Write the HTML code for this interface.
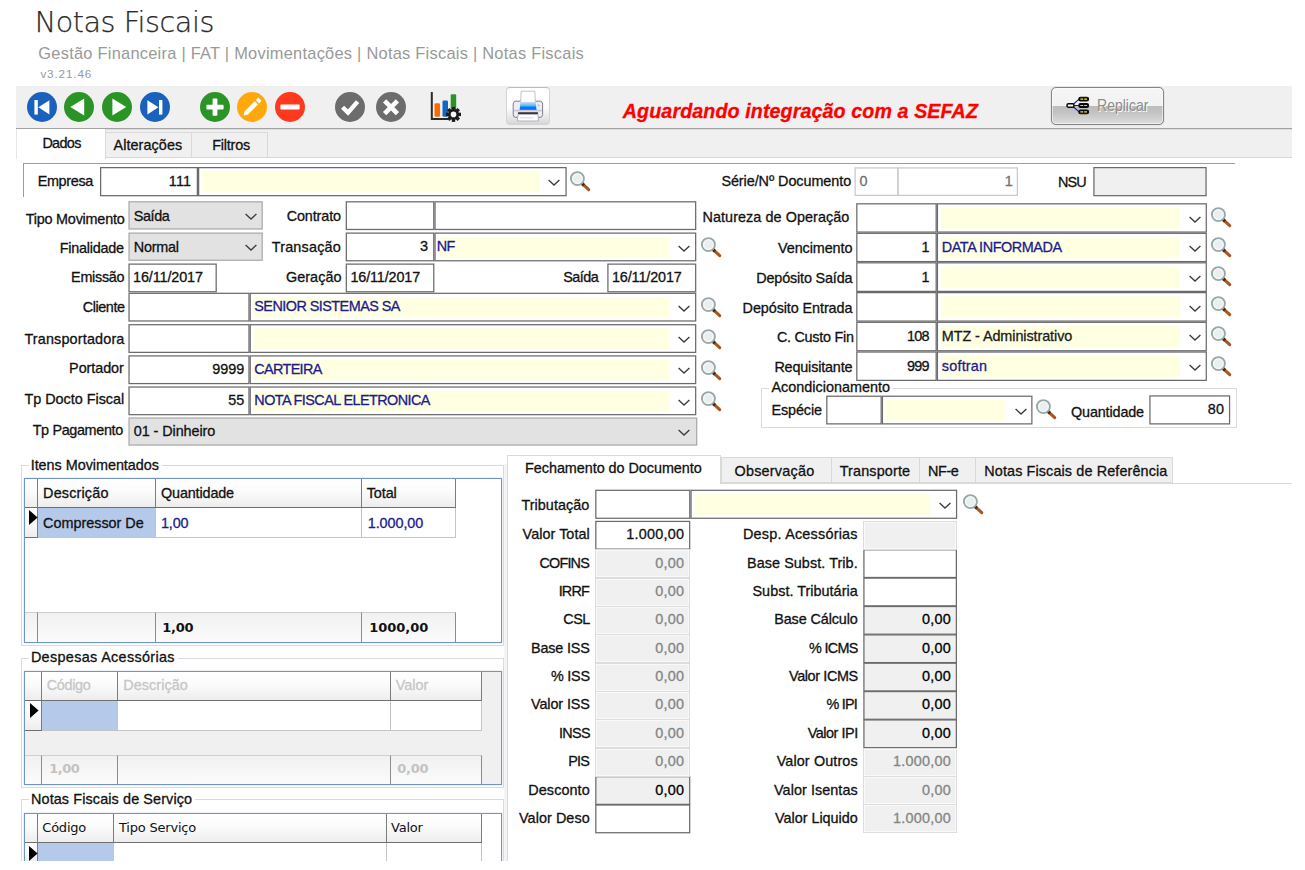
<!DOCTYPE html>
<html lang="pt-BR"><head><meta charset="utf-8"><title>Notas Fiscais</title>
<style>
html,body{margin:0;padding:0;background:#fff;}
body{width:1305px;height:870px;position:relative;overflow:hidden;font-family:"Liberation Sans",Arial,sans-serif;font-size:14.4px;color:#111;}
div,svg{position:absolute;box-sizing:border-box;}
.t{white-space:nowrap;height:20px;-webkit-text-stroke:0.3px;}
.a{overflow:visible;}
.tab{background:#f0f0f0;border:1px solid #d9d9d9;}
.gh{background:linear-gradient(#ffffff,#fbfbfb 45%,#ededed);border-right:1px solid #7c7c7c;border-bottom:1px solid #6f6f6f;}
.gc{background:#fff;border-right:1px solid #c4c4c4;border-bottom:1px solid #c4c4c4;}
.gf{background:linear-gradient(#f1f1f1,#fbfbfb);border-right:1px solid #8c8c8c;border-top:1px solid #cfcfcf;}
.grid{border:1px solid #7094c6;background:#fff;box-shadow:0 0 0.8px #7094c6;}
.grp{border:1px solid #dadada;}
.dis{background:#f0f0f0;border:1px solid #dddddd;box-shadow:inset 0 0 0 1px #f9f9f9;}
</style></head><body>

<div class="t" style="left:34.8px;top:2.4px;font-family:'DejaVu Sans Light','DejaVu Sans','Liberation Sans',sans-serif;font-weight:200;font-size:28.6px;line-height:40px;height:40px;color:#2a2a2a;letter-spacing:-0.45px;-webkit-text-stroke:0.25px;">Notas Fiscais</div>
<div class="t" style="left:38.30px;top:43.12px;font-size:16.4px;line-height:20px;color:#999;letter-spacing:0.257px;-webkit-text-stroke:0;">Gestão Financeira | FAT | Movimentações | Notas Fiscais | Notas Fiscais</div>
<div class="t" style="left:40.40px;top:64.45px;font-size:11.7px;line-height:20px;color:#999;letter-spacing:0.864px;-webkit-text-stroke:0;">v3.21.46</div>
<div style="left:16px;top:86px;width:1276px;height:72px;background:#f0f0f0;"></div>
<div style="left:16px;top:127.5px;width:1276px;height:1px;background:#a2a2a2;"></div>
<div style="left:16px;top:128.5px;width:1276px;height:1px;background:#dedede;"></div>
<div style="left:16px;top:157.4px;width:1276px;height:1px;background:#d6d6d6;"></div>
<svg class="a" style="left:26.6px;top:92.2px" width="30" height="30" viewBox="0 0 30 30"><circle cx="15" cy="15" r="15" fill="#1a60bd"/><rect x="7.4" y="8" width="3.4" height="14.6" fill="#fff"/><path d="M22.4 8.2 L11.4 15.3 L22.4 22.4 Z" fill="#fff"/></svg>
<svg class="a" style="left:64.3px;top:92.2px" width="30" height="30" viewBox="0 0 30 30"><circle cx="15" cy="15" r="15" fill="#2a9427"/><path d="M20.2 6.6 L6.4 15 L20.2 23.4 Z" fill="#fff"/></svg>
<svg class="a" style="left:102.1px;top:92.2px" width="30" height="30" viewBox="0 0 30 30"><circle cx="15" cy="15" r="15" fill="#2a9427"/><path d="M10.4 6.6 L24.2 15 L10.4 23.4 Z" fill="#fff"/></svg>
<svg class="a" style="left:140.0px;top:92.2px" width="30" height="30" viewBox="0 0 30 30"><circle cx="15" cy="15" r="15" fill="#1a60bd"/><rect x="19" y="8" width="3.4" height="14.6" fill="#fff"/><path d="M7.4 8.2 L18.4 15.3 L7.4 22.4 Z" fill="#fff"/></svg>
<svg class="a" style="left:199.5px;top:92.2px" width="30" height="30" viewBox="0 0 30 30"><circle cx="15" cy="15" r="15" fill="#2a9427"/><rect x="12.6" y="6.6" width="4.8" height="17.2" rx="0.8" fill="#fff"/><rect x="6.4" y="12.8" width="17.2" height="4.8" rx="0.8" fill="#fff"/></svg>
<svg class="a" style="left:237.2px;top:92.2px" width="30" height="30" viewBox="0 0 30 30"><circle cx="15" cy="15" r="15" fill="#ffa80c"/><path d="M6.6 23.6 L7.6 19.2 L17.6 9.2 L21 12.6 L11 22.6 Z" fill="#fff"/><path d="M18.7 8.1 L20.6 6.2 Q21.3 5.5 22 6.2 L24 8.2 Q24.7 8.9 24 9.6 L22.1 11.5 Z" fill="#fff"/></svg>
<svg class="a" style="left:275.0px;top:92.2px" width="30" height="30" viewBox="0 0 30 30"><circle cx="15" cy="15" r="15" fill="#fd3a1d"/><rect x="5.4" y="12.5" width="19.2" height="5" rx="0.8" fill="#fff"/></svg>
<svg class="a" style="left:334.5px;top:92.2px" width="30" height="30" viewBox="0 0 30 30"><circle cx="15" cy="15" r="15" fill="#6c6c6c"/><path d="M7.6 15.2 L13 20.6 L22.6 9.6" fill="none" stroke="#fff" stroke-width="4.4"/></svg>
<svg class="a" style="left:376.2px;top:92.2px" width="30" height="30" viewBox="0 0 30 30"><circle cx="15" cy="15" r="15" fill="#6c6c6c"/><path d="M8.6 8.8 L21.4 21.6 M21.4 8.8 L8.6 21.6" fill="none" stroke="#fff" stroke-width="4.6"/></svg>
<svg class="a" style="left:430px;top:91px" width="33" height="32" viewBox="0 0 33 32">
<path d="M1.8 1 V28 H18" fill="none" stroke="#2a2a2a" stroke-width="2"/>
<rect x="4.5" y="12.2" width="5.5" height="13.6" rx="1.2" fill="#ff6a00"/>
<rect x="12.5" y="9.6" width="5.5" height="16.2" rx="1.2" fill="#1565c0"/>
<rect x="20.7" y="3.2" width="5.5" height="16" rx="1.2" fill="#2a9427"/>
<g transform="translate(23.5,23.4)"><circle r="5.4" fill="#1c1c1c"/>
<g fill="#1c1c1c"><rect x="-1.7" y="-7.5" width="3.4" height="15"/><rect x="-1.7" y="-7.5" width="3.4" height="15" transform="rotate(45)"/><rect x="-1.7" y="-7.5" width="3.4" height="15" transform="rotate(90)"/><rect x="-1.7" y="-7.5" width="3.4" height="15" transform="rotate(135)"/></g>
<circle r="2.8" fill="#fafafa"/></g>
</svg>
<div style="left:506px;top:87px;width:43.5px;height:38px;border:1px solid #d4d4d4;border-top-color:#bcbcbc;border-radius:4px;background:linear-gradient(#ffffff,#fdfdfd 55%,#e4e4e4 85%,#d6d6d6);"></div>
<svg class="a" style="left:512px;top:90px" width="32" height="33" viewBox="0 0 32 33">
<defs><linearGradient id="pb" x1="0" y1="0" x2="0" y2="1"><stop offset="0" stop-color="#bfe2fb"/><stop offset="0.45" stop-color="#58b4f7"/><stop offset="0.6" stop-color="#0a78f0"/><stop offset="1" stop-color="#0a6cf0"/></linearGradient></defs>
<path d="M3.2 11.2 Q1.2 11.8 1.2 14 V24.5 Q1.2 27.4 4 27.4 H28 Q30.6 27.4 30.6 24.5 V14 Q30.6 11.8 28.6 11.2 Z" fill="#eceef6" stroke="#7d7d86" stroke-width="1"/>
<path d="M9.2 1.2 H22.8 L23.4 12.6 H8.6 Z" fill="#fffffb" stroke="#c2c2cc" stroke-width="1"/>
<path d="M8.4 12.2 H23.6 L24.6 20.4 H7.6 Z" fill="url(#pb)"/>
<rect x="2" y="19.8" width="28" height="1.6" fill="#c4c6d6"/>
<rect x="5.8" y="22.2" width="20.4" height="1.8" rx="0.9" fill="#2e2a28"/>
<path d="M6 24.4 H26 L26.6 31 H5.4 Z" fill="#fdfdff" stroke="#a9a9b6" stroke-width="0.9"/>
<rect x="8" y="27.4" width="13" height="0.9" fill="#d4d4de"/>
<circle cx="26.6" cy="15.4" r="0.9" fill="#7fd0b0"/>
</svg>
<div class="t" style="left:622.80px;top:101.47px;font-size:19.7px;line-height:20px;color:#ff0000;letter-spacing:0.091px;font-weight:bold;font-style:italic;">Aguardando integração com a SEFAZ</div>
<div style="left:1050.5px;top:87.3px;width:113px;height:37.4px;border:1px solid #858585;border-radius:5px;background:linear-gradient(#f5f5f5,#f2f2f2 49%,#bcbcbc 51%,#c4c4c4 70%,#dedede);box-shadow:inset 0 0 0 1px rgba(255,255,255,.55),0 0 1px #8a8a8a;"></div>
<svg class="a" style="left:1066.2px;top:95.6px" width="24" height="19" viewBox="0 0 25 20">
<path d="M6 10 L14 3 M6 10 L14 10 M6 10 L14 17" stroke="#1a1aa8" stroke-width="1.2" fill="none"/>
<rect x="1" y="8.2" width="7.2" height="3.6" rx="1.4" fill="#fff" stroke="#0a0a0a" stroke-width="1.6"/>
<rect x="13.4" y="1.3" width="10.2" height="4" rx="1.8" fill="#0a0a0a" stroke="#0a0a0a" stroke-width="1.2"/>
<rect x="13.4" y="8" width="10.2" height="4" rx="1.8" fill="#0a0a0a" stroke="#0a0a0a" stroke-width="1.2"/>
<rect x="13.4" y="14.7" width="10.2" height="4" rx="1.8" fill="#0a0a0a" stroke="#0a0a0a" stroke-width="1.2"/>
<path d="M15 3.3 H22 M15 10 H22 M15 16.7 H22" stroke="#ffe600" stroke-width="1.3" stroke-dasharray="3 1"/>
</svg>
<div class="t" style="left:1097.30px;top:95.95px;font-size:16.6px;line-height:20px;color:#8b8b8b;letter-spacing:0.000px;-webkit-text-stroke:0;text-shadow:1px 1px 0 #fff;transform:scaleX(0.846);transform-origin:0 0;">Replicar</div>
<div class="tab" style="left:105px;top:132px;width:86.5px;height:25.5px;"></div>
<div class="tab" style="left:190.5px;top:132px;width:77.5px;height:25.5px;"></div>
<div style="left:16px;top:128.5px;width:89.5px;height:30px;background:#fff;border-right:1px solid #d9d9d9;border-left:1px solid #e6e6e6;"></div>
<div class="t" style="left:42.40px;top:133.01px;font-size:14.4px;line-height:20px;color:#111;letter-spacing:-0.665px;">Dados</div>
<div class="t" style="left:113.50px;top:135.31px;font-size:14.4px;line-height:20px;color:#111;letter-spacing:0.076px;">Alterações</div>
<div class="t" style="left:212.30px;top:135.31px;font-size:14.4px;line-height:20px;color:#111;letter-spacing:-0.214px;">Filtros</div>
<div style="left:23px;top:163px;width:1212px;height:1px;background:#9c9c9c;"></div>
<div style="left:23px;top:163px;width:1px;height:34px;background:#9c9c9c;"></div>
<svg class="a" style="left:0;top:0" width="1305" height="870" viewBox="0 0 1305 870"><rect x="100.62" y="167.62" width="96.75" height="28.05" fill="#fff" stroke="#6b6b6b" stroke-width="1.25"/><rect x="198.62" y="167.62" width="367.45" height="28.05" fill="#fff" stroke="#6b6b6b" stroke-width="1.25"/><rect x="202.20" y="171.40" width="337.80" height="20.90" fill="#ffffe1"/><rect x="855.12" y="167.93" width="42.75" height="27.45" fill="#fff" stroke="#c9c9c9" stroke-width="1.25"/><rect x="898.12" y="167.93" width="119.25" height="27.45" fill="#fff" stroke="#c9c9c9" stroke-width="1.25"/><rect x="1093.92" y="167.62" width="112.15" height="28.05" fill="#f0f0f0" stroke="#6b6b6b" stroke-width="1.25"/><rect x="129.03" y="201.82" width="133.15" height="27.15" fill="#e2e2e2" stroke="#aaaaaa" stroke-width="1.25"/><rect x="346.32" y="201.82" width="87.45" height="27.65" fill="#fff" stroke="#6b6b6b" stroke-width="1.25"/><rect x="435.02" y="201.82" width="260.65" height="27.65" fill="#fff" stroke="#6b6b6b" stroke-width="1.25"/><rect x="129.03" y="233.12" width="133.15" height="27.15" fill="#e2e2e2" stroke="#aaaaaa" stroke-width="1.25"/><rect x="346.32" y="233.12" width="87.45" height="27.65" fill="#fff" stroke="#6b6b6b" stroke-width="1.25"/><rect x="435.02" y="233.12" width="260.65" height="27.65" fill="#fff" stroke="#6b6b6b" stroke-width="1.25"/><rect x="438.60" y="236.90" width="230.70" height="20.50" fill="#ffffe1"/><rect x="129.03" y="264.12" width="87.15" height="27.65" fill="#fff" stroke="#6b6b6b" stroke-width="1.25"/><rect x="346.32" y="264.12" width="87.45" height="27.65" fill="#fff" stroke="#6b6b6b" stroke-width="1.25"/><rect x="607.92" y="264.12" width="87.75" height="27.65" fill="#fff" stroke="#6b6b6b" stroke-width="1.25"/><rect x="129.03" y="293.32" width="119.95" height="27.65" fill="#fff" stroke="#6b6b6b" stroke-width="1.25"/><rect x="250.22" y="293.32" width="445.45" height="27.65" fill="#fff" stroke="#6b6b6b" stroke-width="1.25"/><rect x="253.80" y="297.10" width="415.50" height="20.50" fill="#ffffe1"/><rect x="129.03" y="324.73" width="119.95" height="27.65" fill="#fff" stroke="#6b6b6b" stroke-width="1.25"/><rect x="250.22" y="324.73" width="445.45" height="27.65" fill="#fff" stroke="#6b6b6b" stroke-width="1.25"/><rect x="253.80" y="328.50" width="415.50" height="20.50" fill="#ffffe1"/><rect x="129.03" y="355.93" width="119.95" height="27.65" fill="#fff" stroke="#6b6b6b" stroke-width="1.25"/><rect x="250.22" y="355.93" width="445.45" height="27.65" fill="#fff" stroke="#6b6b6b" stroke-width="1.25"/><rect x="253.80" y="359.70" width="415.50" height="20.50" fill="#ffffe1"/><rect x="129.03" y="387.02" width="119.95" height="27.65" fill="#fff" stroke="#6b6b6b" stroke-width="1.25"/><rect x="250.22" y="387.02" width="445.45" height="27.65" fill="#fff" stroke="#6b6b6b" stroke-width="1.25"/><rect x="253.80" y="390.80" width="415.50" height="20.50" fill="#ffffe1"/><rect x="129.03" y="418.02" width="567.65" height="27.05" fill="#e2e2e2" stroke="#aaaaaa" stroke-width="1.25"/><rect x="856.83" y="203.82" width="79.35" height="28.25" fill="#fff" stroke="#6b6b6b" stroke-width="1.25"/><rect x="937.42" y="203.82" width="268.85" height="28.25" fill="#fff" stroke="#6b6b6b" stroke-width="1.25"/><rect x="941.00" y="207.60" width="239.00" height="21.10" fill="#ffffe1"/><rect x="856.83" y="233.32" width="79.35" height="28.25" fill="#fff" stroke="#6b6b6b" stroke-width="1.25"/><rect x="937.42" y="233.32" width="268.85" height="28.25" fill="#fff" stroke="#6b6b6b" stroke-width="1.25"/><rect x="941.00" y="237.10" width="239.00" height="21.10" fill="#ffffe1"/><rect x="856.83" y="262.82" width="79.35" height="28.55" fill="#fff" stroke="#6b6b6b" stroke-width="1.25"/><rect x="937.42" y="262.82" width="268.85" height="28.55" fill="#fff" stroke="#6b6b6b" stroke-width="1.25"/><rect x="941.00" y="266.60" width="239.00" height="21.40" fill="#ffffe1"/><rect x="856.83" y="292.62" width="79.35" height="28.45" fill="#fff" stroke="#6b6b6b" stroke-width="1.25"/><rect x="937.42" y="292.62" width="268.85" height="28.45" fill="#fff" stroke="#6b6b6b" stroke-width="1.25"/><rect x="941.00" y="296.40" width="239.00" height="21.30" fill="#ffffe1"/><rect x="856.83" y="322.32" width="79.35" height="28.45" fill="#fff" stroke="#6b6b6b" stroke-width="1.25"/><rect x="937.42" y="322.32" width="268.85" height="28.45" fill="#fff" stroke="#6b6b6b" stroke-width="1.25"/><rect x="941.00" y="326.10" width="239.00" height="21.30" fill="#ffffe1"/><rect x="856.83" y="352.02" width="79.35" height="28.35" fill="#fff" stroke="#6b6b6b" stroke-width="1.25"/><rect x="937.42" y="352.02" width="268.85" height="28.35" fill="#fff" stroke="#6b6b6b" stroke-width="1.25"/><rect x="941.00" y="355.80" width="239.00" height="21.20" fill="#ffffe1"/><rect x="826.83" y="396.23" width="54.35" height="27.65" fill="#fff" stroke="#6b6b6b" stroke-width="1.25"/><rect x="882.42" y="396.23" width="149.45" height="27.65" fill="#fff" stroke="#6b6b6b" stroke-width="1.25"/><rect x="886.00" y="400.00" width="120.00" height="20.50" fill="#ffffe1"/><rect x="1149.92" y="395.93" width="79.65" height="27.95" fill="#fff" stroke="#6b6b6b" stroke-width="1.25"/><rect x="595.83" y="490.32" width="93.95" height="27.95" fill="#fff" stroke="#6b6b6b" stroke-width="1.25"/><rect x="691.02" y="490.32" width="265.55" height="27.95" fill="#fff" stroke="#6b6b6b" stroke-width="1.25"/><rect x="694.60" y="494.10" width="235.50" height="20.80" fill="#ffffe1"/><rect x="595.83" y="521.42" width="93.85" height="27.71" fill="#fff" stroke="#6b6b6b" stroke-width="1.25"/><rect x="595.83" y="776.66" width="93.85" height="27.71" fill="#f0f0f0" stroke="#6b6b6b" stroke-width="1.25"/><rect x="595.83" y="805.02" width="93.85" height="27.71" fill="#fff" stroke="#6b6b6b" stroke-width="1.25"/><rect x="863.92" y="549.78" width="92.45" height="27.71" fill="#fff" stroke="#6b6b6b" stroke-width="1.25"/><rect x="863.92" y="578.14" width="92.45" height="27.71" fill="#fff" stroke="#6b6b6b" stroke-width="1.25"/><rect x="863.92" y="606.50" width="92.45" height="27.71" fill="#f0f0f0" stroke="#6b6b6b" stroke-width="1.25"/><rect x="863.92" y="634.87" width="92.45" height="27.71" fill="#f0f0f0" stroke="#6b6b6b" stroke-width="1.25"/><rect x="863.92" y="663.22" width="92.45" height="27.71" fill="#f0f0f0" stroke="#6b6b6b" stroke-width="1.25"/><rect x="863.92" y="691.58" width="92.45" height="27.71" fill="#f0f0f0" stroke="#6b6b6b" stroke-width="1.25"/><rect x="863.92" y="719.94" width="92.45" height="27.71" fill="#f0f0f0" stroke="#6b6b6b" stroke-width="1.25"/></svg>
<div class="t" style="left:37.70px;top:170.51px;font-size:14.4px;line-height:20px;color:#111;letter-spacing:-0.332px;">Empresa</div>
<div class="t" style="right:1113.65px;top:170.51px;font-size:14.4px;line-height:20px;color:#111;letter-spacing:0.250px;">111</div>
<svg class="a" style="left:548.0px;top:179.3px" width="12" height="7" viewBox="0 0 12 7"><path d="M0.6 0.9 L6 6 L11.4 0.9" fill="none" stroke="#3c3c3c" stroke-width="1.35"/></svg>
<svg class="a" style="left:570.0px;top:170.5px" width="21" height="21" viewBox="0 0 21 21"><line x1="12.4" y1="12.8" x2="18.7" y2="18.6" stroke="#a8551f" stroke-width="3.1" stroke-linecap="round"/><line x1="12.1" y1="12.5" x2="14" y2="14.3" stroke="#4a2a16" stroke-width="3.1"/><circle cx="7.4" cy="7.6" r="6.5" fill="#e9eeef" stroke="#98a8aa" stroke-width="1.9"/><circle cx="7.4" cy="7.6" r="4.7" fill="none" stroke="#f4f7f7" stroke-width="1.3"/></svg>
<div class="t" style="left:721.40px;top:170.91px;font-size:14.4px;line-height:20px;color:#111;letter-spacing:-0.062px;">Série/Nº Documento</div>
<div class="t" style="left:859.60px;top:170.91px;font-size:14.4px;line-height:20px;color:#707070;letter-spacing:0.250px;">0</div>
<div class="t" style="right:292.05px;top:170.91px;font-size:14.4px;line-height:20px;color:#707070;letter-spacing:0.250px;">1</div>
<div class="t" style="right:219.10px;top:171.61px;font-size:14.4px;line-height:20px;color:#111;letter-spacing:-0.800px;">NSU</div>
<div class="t" style="left:25.70px;top:209.41px;font-size:14.4px;line-height:20px;color:#111;letter-spacing:-0.215px;">Tipo Movimento</div>
<div class="t" style="left:59.80px;top:237.81px;font-size:14.4px;line-height:20px;color:#111;letter-spacing:-0.245px;">Finalidade</div>
<div class="t" style="left:71.10px;top:266.51px;font-size:14.4px;line-height:20px;color:#111;letter-spacing:-0.288px;">Emissão</div>
<div class="t" style="left:82.80px;top:297.11px;font-size:14.4px;line-height:20px;color:#111;letter-spacing:-0.432px;">Cliente</div>
<div class="t" style="left:24.40px;top:328.61px;font-size:14.4px;line-height:20px;color:#111;letter-spacing:0.163px;">Transportadora</div>
<div class="t" style="left:69.10px;top:357.81px;font-size:14.4px;line-height:20px;color:#111;letter-spacing:-0.067px;">Portador</div>
<div class="t" style="left:24.40px;top:388.71px;font-size:14.4px;line-height:20px;color:#111;letter-spacing:-0.009px;">Tp Docto Fiscal</div>
<div class="t" style="left:32.70px;top:420.41px;font-size:14.4px;line-height:20px;color:#111;letter-spacing:-0.355px;">Tp Pagamento</div>
<svg class="a" style="left:244.7px;top:213.1px" width="12" height="7" viewBox="0 0 12 7"><path d="M0.6 0.9 L6 6 L11.4 0.9" fill="none" stroke="#3c3c3c" stroke-width="1.35"/></svg>
<div class="t" style="left:133.80px;top:205.81px;font-size:14.4px;line-height:20px;color:#111;letter-spacing:-0.406px;">Saída</div>
<div class="t" style="left:286.70px;top:206.21px;font-size:14.4px;line-height:20px;color:#111;letter-spacing:-0.116px;">Contrato</div>
<svg class="a" style="left:244.7px;top:244.4px" width="12" height="7" viewBox="0 0 12 7"><path d="M0.6 0.9 L6 6 L11.4 0.9" fill="none" stroke="#3c3c3c" stroke-width="1.35"/></svg>
<div class="t" style="left:133.80px;top:236.91px;font-size:14.4px;line-height:20px;color:#111;letter-spacing:-0.268px;">Normal</div>
<div class="t" style="left:271.70px;top:237.41px;font-size:14.4px;line-height:20px;color:#111;letter-spacing:0.200px;">Transação</div>
<div class="t" style="right:876.75px;top:236.01px;font-size:14.4px;line-height:20px;color:#111;letter-spacing:0.250px;">3</div>
<svg class="a" style="left:678.0px;top:244.6px" width="12" height="7" viewBox="0 0 12 7"><path d="M0.6 0.9 L6 6 L11.4 0.9" fill="none" stroke="#3c3c3c" stroke-width="1.35"/></svg>
<div class="t" style="right:850.60px;top:236.01px;font-size:14.4px;line-height:20px;color:#1b1b8f;letter-spacing:-0.800px;">NF</div>
<svg class="a" style="left:700.7px;top:236.7px" width="21" height="21" viewBox="0 0 21 21"><line x1="12.4" y1="12.8" x2="18.7" y2="18.6" stroke="#a8551f" stroke-width="3.1" stroke-linecap="round"/><line x1="12.1" y1="12.5" x2="14" y2="14.3" stroke="#4a2a16" stroke-width="3.1"/><circle cx="7.4" cy="7.6" r="6.5" fill="#e9eeef" stroke="#98a8aa" stroke-width="1.9"/><circle cx="7.4" cy="7.6" r="4.7" fill="none" stroke="#f4f7f7" stroke-width="1.3"/></svg>
<div class="t" style="left:133.10px;top:266.51px;font-size:14.4px;line-height:20px;color:#111;letter-spacing:-0.130px;">16/11/2017</div>
<div class="t" style="left:286.00px;top:266.81px;font-size:14.4px;line-height:20px;color:#111;letter-spacing:0.038px;">Geração</div>
<div class="t" style="left:350.40px;top:266.51px;font-size:14.4px;line-height:20px;color:#111;letter-spacing:-0.130px;">16/11/2017</div>
<div class="t" style="left:563.30px;top:266.81px;font-size:14.4px;line-height:20px;color:#111;letter-spacing:-0.526px;">Saída</div>
<div class="t" style="left:612.00px;top:266.51px;font-size:14.4px;line-height:20px;color:#111;letter-spacing:-0.130px;">16/11/2017</div>
<svg class="a" style="left:678.0px;top:304.8px" width="12" height="7" viewBox="0 0 12 7"><path d="M0.6 0.9 L6 6 L11.4 0.9" fill="none" stroke="#3c3c3c" stroke-width="1.35"/></svg>
<div class="t" style="left:254.30px;top:296.26px;font-size:14.4px;line-height:20px;color:#1b1b8f;letter-spacing:-0.530px;">SENIOR SISTEMAS SA</div>
<svg class="a" style="left:700.7px;top:297.2px" width="21" height="21" viewBox="0 0 21 21"><line x1="12.4" y1="12.8" x2="18.7" y2="18.6" stroke="#a8551f" stroke-width="3.1" stroke-linecap="round"/><line x1="12.1" y1="12.5" x2="14" y2="14.3" stroke="#4a2a16" stroke-width="3.1"/><circle cx="7.4" cy="7.6" r="6.5" fill="#e9eeef" stroke="#98a8aa" stroke-width="1.9"/><circle cx="7.4" cy="7.6" r="4.7" fill="none" stroke="#f4f7f7" stroke-width="1.3"/></svg>
<svg class="a" style="left:678.0px;top:336.2px" width="12" height="7" viewBox="0 0 12 7"><path d="M0.6 0.9 L6 6 L11.4 0.9" fill="none" stroke="#3c3c3c" stroke-width="1.35"/></svg>
<svg class="a" style="left:700.7px;top:328.6px" width="21" height="21" viewBox="0 0 21 21"><line x1="12.4" y1="12.8" x2="18.7" y2="18.6" stroke="#a8551f" stroke-width="3.1" stroke-linecap="round"/><line x1="12.1" y1="12.5" x2="14" y2="14.3" stroke="#4a2a16" stroke-width="3.1"/><circle cx="7.4" cy="7.6" r="6.5" fill="#e9eeef" stroke="#98a8aa" stroke-width="1.9"/><circle cx="7.4" cy="7.6" r="4.7" fill="none" stroke="#f4f7f7" stroke-width="1.3"/></svg>
<div class="t" style="left:212.30px;top:358.86px;font-size:14.4px;line-height:20px;color:#111;letter-spacing:-0.009px;">9999</div>
<svg class="a" style="left:678.0px;top:367.4px" width="12" height="7" viewBox="0 0 12 7"><path d="M0.6 0.9 L6 6 L11.4 0.9" fill="none" stroke="#3c3c3c" stroke-width="1.35"/></svg>
<div class="t" style="left:254.30px;top:358.86px;font-size:14.4px;line-height:20px;color:#1b1b8f;letter-spacing:-0.644px;">CARTEIRA</div>
<svg class="a" style="left:700.7px;top:359.8px" width="21" height="21" viewBox="0 0 21 21"><line x1="12.4" y1="12.8" x2="18.7" y2="18.6" stroke="#a8551f" stroke-width="3.1" stroke-linecap="round"/><line x1="12.1" y1="12.5" x2="14" y2="14.3" stroke="#4a2a16" stroke-width="3.1"/><circle cx="7.4" cy="7.6" r="6.5" fill="#e9eeef" stroke="#98a8aa" stroke-width="1.9"/><circle cx="7.4" cy="7.6" r="4.7" fill="none" stroke="#f4f7f7" stroke-width="1.3"/></svg>
<div class="t" style="left:228.30px;top:389.96px;font-size:14.4px;line-height:20px;color:#111;letter-spacing:-0.009px;">55</div>
<svg class="a" style="left:678.0px;top:398.5px" width="12" height="7" viewBox="0 0 12 7"><path d="M0.6 0.9 L6 6 L11.4 0.9" fill="none" stroke="#3c3c3c" stroke-width="1.35"/></svg>
<div class="t" style="left:254.30px;top:389.96px;font-size:14.4px;line-height:20px;color:#1b1b8f;letter-spacing:-0.561px;">NOTA FISCAL ELETRONICA</div>
<svg class="a" style="left:700.7px;top:390.9px" width="21" height="21" viewBox="0 0 21 21"><line x1="12.4" y1="12.8" x2="18.7" y2="18.6" stroke="#a8551f" stroke-width="3.1" stroke-linecap="round"/><line x1="12.1" y1="12.5" x2="14" y2="14.3" stroke="#4a2a16" stroke-width="3.1"/><circle cx="7.4" cy="7.6" r="6.5" fill="#e9eeef" stroke="#98a8aa" stroke-width="1.9"/><circle cx="7.4" cy="7.6" r="4.7" fill="none" stroke="#f4f7f7" stroke-width="1.3"/></svg>
<svg class="a" style="left:678.0px;top:429.2px" width="12" height="7" viewBox="0 0 12 7"><path d="M0.6 0.9 L6 6 L11.4 0.9" fill="none" stroke="#3c3c3c" stroke-width="1.35"/></svg>
<div class="t" style="left:133.80px;top:421.31px;font-size:14.4px;line-height:20px;color:#111;letter-spacing:-0.073px;">01 - Dinheiro</div>
<div class="t" style="left:702.50px;top:206.81px;font-size:14.4px;line-height:20px;color:#111;letter-spacing:0.065px;">Natureza de Operação</div>
<svg class="a" style="left:1188.6px;top:215.6px" width="12" height="7" viewBox="0 0 12 7"><path d="M0.6 0.9 L6 6 L11.4 0.9" fill="none" stroke="#3c3c3c" stroke-width="1.35"/></svg>
<svg class="a" style="left:1211.3px;top:207.4px" width="21" height="21" viewBox="0 0 21 21"><line x1="12.4" y1="12.8" x2="18.7" y2="18.6" stroke="#a8551f" stroke-width="3.1" stroke-linecap="round"/><line x1="12.1" y1="12.5" x2="14" y2="14.3" stroke="#4a2a16" stroke-width="3.1"/><circle cx="7.4" cy="7.6" r="6.5" fill="#e9eeef" stroke="#98a8aa" stroke-width="1.9"/><circle cx="7.4" cy="7.6" r="4.7" fill="none" stroke="#f4f7f7" stroke-width="1.3"/></svg>
<div class="t" style="left:778.00px;top:237.71px;font-size:14.4px;line-height:20px;color:#111;letter-spacing:-0.085px;">Vencimento</div>
<div class="t" style="right:375.35px;top:237.06px;font-size:14.4px;line-height:20px;color:#111;letter-spacing:0.250px;">1</div>
<svg class="a" style="left:1188.6px;top:245.1px" width="12" height="7" viewBox="0 0 12 7"><path d="M0.6 0.9 L6 6 L11.4 0.9" fill="none" stroke="#3c3c3c" stroke-width="1.35"/></svg>
<div class="t" style="left:941.80px;top:237.06px;font-size:14.4px;line-height:20px;color:#1b1b8f;letter-spacing:-0.427px;">DATA INFORMADA</div>
<svg class="a" style="left:1211.3px;top:236.9px" width="21" height="21" viewBox="0 0 21 21"><line x1="12.4" y1="12.8" x2="18.7" y2="18.6" stroke="#a8551f" stroke-width="3.1" stroke-linecap="round"/><line x1="12.1" y1="12.5" x2="14" y2="14.3" stroke="#4a2a16" stroke-width="3.1"/><circle cx="7.4" cy="7.6" r="6.5" fill="#e9eeef" stroke="#98a8aa" stroke-width="1.9"/><circle cx="7.4" cy="7.6" r="4.7" fill="none" stroke="#f4f7f7" stroke-width="1.3"/></svg>
<div class="t" style="left:756.30px;top:267.81px;font-size:14.4px;line-height:20px;color:#111;letter-spacing:-0.169px;">Depósito Saída</div>
<div class="t" style="right:375.35px;top:266.71px;font-size:14.4px;line-height:20px;color:#111;letter-spacing:0.250px;">1</div>
<svg class="a" style="left:1188.6px;top:274.8px" width="12" height="7" viewBox="0 0 12 7"><path d="M0.6 0.9 L6 6 L11.4 0.9" fill="none" stroke="#3c3c3c" stroke-width="1.35"/></svg>
<svg class="a" style="left:1211.3px;top:266.4px" width="21" height="21" viewBox="0 0 21 21"><line x1="12.4" y1="12.8" x2="18.7" y2="18.6" stroke="#a8551f" stroke-width="3.1" stroke-linecap="round"/><line x1="12.1" y1="12.5" x2="14" y2="14.3" stroke="#4a2a16" stroke-width="3.1"/><circle cx="7.4" cy="7.6" r="6.5" fill="#e9eeef" stroke="#98a8aa" stroke-width="1.9"/><circle cx="7.4" cy="7.6" r="4.7" fill="none" stroke="#f4f7f7" stroke-width="1.3"/></svg>
<div class="t" style="left:742.60px;top:297.61px;font-size:14.4px;line-height:20px;color:#111;letter-spacing:-0.092px;">Depósito Entrada</div>
<svg class="a" style="left:1188.6px;top:304.6px" width="12" height="7" viewBox="0 0 12 7"><path d="M0.6 0.9 L6 6 L11.4 0.9" fill="none" stroke="#3c3c3c" stroke-width="1.35"/></svg>
<svg class="a" style="left:1211.3px;top:296.2px" width="21" height="21" viewBox="0 0 21 21"><line x1="12.4" y1="12.8" x2="18.7" y2="18.6" stroke="#a8551f" stroke-width="3.1" stroke-linecap="round"/><line x1="12.1" y1="12.5" x2="14" y2="14.3" stroke="#4a2a16" stroke-width="3.1"/><circle cx="7.4" cy="7.6" r="6.5" fill="#e9eeef" stroke="#98a8aa" stroke-width="1.9"/><circle cx="7.4" cy="7.6" r="4.7" fill="none" stroke="#f4f7f7" stroke-width="1.3"/></svg>
<div class="t" style="left:776.90px;top:327.11px;font-size:14.4px;line-height:20px;color:#111;letter-spacing:-0.269px;">C. Custo Fin</div>
<div class="t" style="right:376.40px;top:326.16px;font-size:14.4px;line-height:20px;color:#111;letter-spacing:-0.800px;">108</div>
<svg class="a" style="left:1188.6px;top:334.2px" width="12" height="7" viewBox="0 0 12 7"><path d="M0.6 0.9 L6 6 L11.4 0.9" fill="none" stroke="#3c3c3c" stroke-width="1.35"/></svg>
<div class="t" style="left:941.80px;top:326.16px;font-size:14.4px;line-height:20px;color:#1a1a1a;letter-spacing:-0.076px;">MTZ - Administrativo</div>
<svg class="a" style="left:1211.3px;top:325.9px" width="21" height="21" viewBox="0 0 21 21"><line x1="12.4" y1="12.8" x2="18.7" y2="18.6" stroke="#a8551f" stroke-width="3.1" stroke-linecap="round"/><line x1="12.1" y1="12.5" x2="14" y2="14.3" stroke="#4a2a16" stroke-width="3.1"/><circle cx="7.4" cy="7.6" r="6.5" fill="#e9eeef" stroke="#98a8aa" stroke-width="1.9"/><circle cx="7.4" cy="7.6" r="4.7" fill="none" stroke="#f4f7f7" stroke-width="1.3"/></svg>
<div class="t" style="left:774.40px;top:356.91px;font-size:14.4px;line-height:20px;color:#111;letter-spacing:-0.171px;">Requisitante</div>
<div class="t" style="right:376.40px;top:355.81px;font-size:14.4px;line-height:20px;color:#111;letter-spacing:-0.800px;">999</div>
<svg class="a" style="left:1188.6px;top:363.9px" width="12" height="7" viewBox="0 0 12 7"><path d="M0.6 0.9 L6 6 L11.4 0.9" fill="none" stroke="#3c3c3c" stroke-width="1.35"/></svg>
<div class="t" style="left:941.80px;top:355.81px;font-size:14.4px;line-height:20px;color:#1b1b8f;letter-spacing:0.211px;">softran</div>
<svg class="a" style="left:1211.3px;top:355.6px" width="21" height="21" viewBox="0 0 21 21"><line x1="12.4" y1="12.8" x2="18.7" y2="18.6" stroke="#a8551f" stroke-width="3.1" stroke-linecap="round"/><line x1="12.1" y1="12.5" x2="14" y2="14.3" stroke="#4a2a16" stroke-width="3.1"/><circle cx="7.4" cy="7.6" r="6.5" fill="#e9eeef" stroke="#98a8aa" stroke-width="1.9"/><circle cx="7.4" cy="7.6" r="4.7" fill="none" stroke="#f4f7f7" stroke-width="1.3"/></svg>
<div class="grp" style="left:760.5px;top:387.5px;width:476.5px;height:40.5px;"></div>
<div style="left:768.5px;top:382px;width:124px;height:12px;background:#fff;"></div>
<div class="t" style="left:771.40px;top:376.61px;font-size:14.4px;line-height:20px;color:#111;letter-spacing:0.014px;">Acondicionamento</div>
<div class="t" style="left:771.40px;top:400.01px;font-size:14.4px;line-height:20px;color:#111;letter-spacing:-0.090px;">Espécie</div>
<svg class="a" style="left:1014.7px;top:407.8px" width="12" height="7" viewBox="0 0 12 7"><path d="M0.6 0.9 L6 6 L11.4 0.9" fill="none" stroke="#3c3c3c" stroke-width="1.35"/></svg>
<svg class="a" style="left:1035.9px;top:398.5px" width="21" height="21" viewBox="0 0 21 21"><line x1="12.4" y1="12.8" x2="18.7" y2="18.6" stroke="#a8551f" stroke-width="3.1" stroke-linecap="round"/><line x1="12.1" y1="12.5" x2="14" y2="14.3" stroke="#4a2a16" stroke-width="3.1"/><circle cx="7.4" cy="7.6" r="6.5" fill="#e9eeef" stroke="#98a8aa" stroke-width="1.9"/><circle cx="7.4" cy="7.6" r="4.7" fill="none" stroke="#f4f7f7" stroke-width="1.3"/></svg>
<div class="t" style="left:1071.00px;top:401.91px;font-size:14.4px;line-height:20px;color:#111;letter-spacing:-0.146px;">Quantidade</div>
<div class="t" style="right:80.75px;top:399.01px;font-size:14.4px;line-height:20px;color:#111;letter-spacing:0.250px;">80</div>
<div style="left:503.5px;top:464px;width:3px;height:397px;background:#f4f4f4;"></div>
<div class="grp" style="left:20.5px;top:464.5px;width:483px;height:181.5px;"></div>
<div style="left:28.5px;top:458px;width:133px;height:12px;background:#fff;"></div>
<div class="t" style="left:30.70px;top:454.61px;font-size:14.4px;line-height:20px;color:#111;letter-spacing:-0.031px;">Itens Movimentados</div>
<div class="grid" style="left:24.4px;top:477.6px;width:477.6px;height:165.6px;"></div>
<div class="gh" style="left:25.4px;top:478.6px;width:13.0px;height:29.0px;"></div>
<div class="gh" style="left:38.4px;top:478.6px;width:117.3px;height:29.0px;"></div>
<div class="t" style="left:43.10px;top:483.01px;font-size:14.4px;line-height:20px;color:#111;letter-spacing:0.164px;">Descrição</div>
<div class="gh" style="left:155.7px;top:478.6px;width:206.7px;height:29.0px;"></div>
<div class="t" style="left:161.00px;top:483.01px;font-size:14.4px;line-height:20px;color:#111;letter-spacing:-0.146px;">Quantidade</div>
<div class="gh" style="left:362.4px;top:478.6px;width:93.4px;height:29.0px;"></div>
<div class="t" style="left:366.70px;top:483.01px;font-size:14.4px;line-height:20px;color:#111;letter-spacing:-0.084px;">Total</div>
<div class="gh" style="left:25.4px;top:507.6px;width:13.0px;height:30.0px;"></div>
<svg class="a" style="left:29.4px;top:510.2px" width="9" height="15" viewBox="0 0 9 15"><path d="M0 0 L8.6 7.5 L0 15 Z" fill="#000"/></svg>
<div class="gc" style="left:38.4px;top:507.6px;width:117.3px;height:30.0px;background:#b5c9eb;"></div>
<div class="t" style="left:43.10px;top:512.51px;font-size:14.4px;line-height:20px;color:#111;letter-spacing:-0.010px;">Compressor De</div>
<div class="gc" style="left:155.7px;top:507.6px;width:206.7px;height:30.0px;"></div>
<div class="t" style="left:161.00px;top:512.51px;font-size:14.4px;line-height:20px;color:#1b1b8f;letter-spacing:-0.182px;">1,00</div>
<div class="gc" style="left:362.4px;top:507.6px;width:93.4px;height:30.0px;"></div>
<div class="t" style="left:367.70px;top:512.51px;font-size:14.4px;line-height:20px;color:#1b1b8f;letter-spacing:-0.057px;">1.000,00</div>
<div class="gf" style="left:25.4px;top:612.4px;width:13.0px;height:29.8px;"></div>
<div class="gf" style="left:38.4px;top:612.4px;width:117.3px;height:29.8px;"></div>
<div class="gf" style="left:155.7px;top:612.4px;width:206.7px;height:29.8px;"></div>
<div class="t" style="left:162.30px;top:618.10px;font-size:13px;line-height:20px;color:#111;letter-spacing:-0.269px;font-family:'DejaVu Sans','Liberation Sans',sans-serif;-webkit-text-stroke:0;font-weight:bold;">1,00</div>
<div class="gf" style="left:362.4px;top:612.4px;width:93.4px;height:29.8px;"></div>
<div class="t" style="left:369.30px;top:618.10px;font-size:13px;line-height:20px;color:#111;letter-spacing:-0.030px;font-family:'DejaVu Sans','Liberation Sans',sans-serif;-webkit-text-stroke:0;font-weight:bold;">1000,00</div>
<div class="grp" style="left:20.5px;top:657.7px;width:483px;height:130px;"></div>
<div style="left:28.5px;top:651px;width:149px;height:12px;background:#fff;"></div>
<div class="t" style="left:30.90px;top:646.91px;font-size:14.4px;line-height:20px;color:#111;letter-spacing:0.338px;">Despesas Acessórias</div>
<div class="grid" style="left:24.4px;top:670.6px;width:477.6px;height:114.6px;background:#f0f0f0;"></div>
<div class="gh" style="left:25.4px;top:671.6px;width:16.8px;height:29.0px;"></div>
<div class="gh" style="left:42.2px;top:671.6px;width:75.6px;height:29.0px;"></div>
<div class="t" style="left:46.80px;top:675.41px;font-size:14.4px;line-height:20px;color:#c6c6c6;letter-spacing:-0.322px;">Código</div>
<div class="gh" style="left:117.8px;top:671.6px;width:273.0px;height:29.0px;"></div>
<div class="t" style="left:123.30px;top:675.41px;font-size:14.4px;line-height:20px;color:#c6c6c6;letter-spacing:0.064px;">Descrição</div>
<div class="gh" style="left:390.8px;top:671.6px;width:91.0px;height:29.0px;"></div>
<div class="t" style="left:395.70px;top:675.41px;font-size:14.4px;line-height:20px;color:#c6c6c6;letter-spacing:0.010px;">Valor</div>
<div class="gh" style="left:25.4px;top:700.6px;width:16.8px;height:30.0px;"></div>
<svg class="a" style="left:29.6px;top:703.0px" width="9" height="15" viewBox="0 0 9 15"><path d="M0 0 L8.6 7.5 L0 15 Z" fill="#000"/></svg>
<div class="gc" style="left:42.2px;top:700.6px;width:75.6px;height:30.0px;background:#b5c9eb;"></div>
<div class="gc" style="left:117.8px;top:700.6px;width:273.0px;height:30.0px;"></div>
<div class="gc" style="left:390.8px;top:700.6px;width:91.0px;height:30.0px;"></div>
<div class="gf" style="left:25.4px;top:754.6px;width:16.8px;height:29.6px;"></div>
<div class="gf" style="left:42.2px;top:754.6px;width:75.6px;height:29.6px;"></div>
<div class="t" style="left:49.30px;top:759.30px;font-size:13px;line-height:20px;color:#c2c2c2;letter-spacing:-0.519px;font-family:'DejaVu Sans','Liberation Sans',sans-serif;-webkit-text-stroke:0;font-weight:bold;">1,00</div>
<div class="gf" style="left:117.8px;top:754.6px;width:273.0px;height:29.6px;"></div>
<div class="gf" style="left:390.8px;top:754.6px;width:91.0px;height:29.6px;"></div>
<div class="t" style="left:397.30px;top:759.30px;font-size:13px;line-height:20px;color:#c2c2c2;letter-spacing:-0.269px;font-family:'DejaVu Sans','Liberation Sans',sans-serif;-webkit-text-stroke:0;font-weight:bold;">0,00</div>
<div class="grp" style="left:20.5px;top:799.3px;width:483px;height:64px;border-bottom:none;"></div>
<div style="left:28.5px;top:793px;width:166px;height:12px;background:#fff;"></div>
<div class="t" style="left:31.00px;top:789.41px;font-size:14.4px;line-height:20px;color:#111;letter-spacing:0.118px;">Notas Fiscais de Serviço</div>
<div class="grid" style="left:24.4px;top:812.6px;width:477.6px;height:50px;border-bottom:none;"></div>
<div class="gh" style="left:25.4px;top:813.6px;width:13.0px;height:29.2px;"></div>
<div class="gh" style="left:38.4px;top:813.6px;width:75.6px;height:29.2px;"></div>
<div class="t" style="left:42.30px;top:818.20px;font-size:13px;line-height:20px;color:#111;letter-spacing:-0.233px;font-family:'DejaVu Sans','Liberation Sans',sans-serif;-webkit-text-stroke:0;">Código</div>
<div class="gh" style="left:114.0px;top:813.6px;width:272.7px;height:29.2px;"></div>
<div class="t" style="left:119.00px;top:818.20px;font-size:13px;line-height:20px;color:#111;letter-spacing:-0.208px;font-family:'DejaVu Sans','Liberation Sans',sans-serif;-webkit-text-stroke:0;">Tipo Serviço</div>
<div class="gh" style="left:386.7px;top:813.6px;width:95.1px;height:29.2px;"></div>
<div class="t" style="left:391.00px;top:818.20px;font-size:13px;line-height:20px;color:#111;letter-spacing:-0.212px;font-family:'DejaVu Sans','Liberation Sans',sans-serif;-webkit-text-stroke:0;">Valor</div>
<div class="gh" style="left:25.4px;top:842.8px;width:13.0px;height:19.2px;border-bottom:none;"></div>
<svg class="a" style="left:29.4px;top:845.5px" width="9" height="15" viewBox="0 0 9 15"><path d="M0 0 L8.6 7.5 L0 15 Z" fill="#000"/></svg>
<div class="gc" style="left:38.4px;top:842.8px;width:75.6px;height:19.2px;background:#b5c9eb;border-bottom:none;"></div>
<div class="gc" style="left:114.0px;top:842.8px;width:272.7px;height:19.2px;border-bottom:none;"></div>
<div class="gc" style="left:386.7px;top:842.8px;width:95.1px;height:19.2px;border-bottom:none;"></div>
<div style="left:506.5px;top:482.6px;width:785.5px;height:1px;background:#dadada;"></div>
<div style="left:506.5px;top:455px;width:1px;height:406px;background:#dadada;"></div>
<div class="tab" style="left:720.7px;top:457.4px;width:111.0px;height:26px;"></div>
<div class="t" style="left:734.50px;top:461.41px;font-size:14.4px;line-height:20px;color:#111;letter-spacing:0.236px;">Observação</div>
<div class="tab" style="left:830.7px;top:457.4px;width:88.9px;height:26px;"></div>
<div class="t" style="left:839.70px;top:461.41px;font-size:14.4px;line-height:20px;color:#111;letter-spacing:0.150px;">Transporte</div>
<div class="tab" style="left:918.6px;top:457.4px;width:57.7px;height:26px;"></div>
<div class="t" style="left:928.00px;top:461.41px;font-size:14.4px;line-height:20px;color:#111;letter-spacing:-0.400px;">NF-e</div>
<div class="tab" style="left:975.3px;top:457.4px;width:198.1px;height:26px;"></div>
<div class="t" style="left:984.30px;top:461.41px;font-size:14.4px;line-height:20px;color:#111;letter-spacing:0.116px;">Notas Fiscais de Referência</div>
<div style="left:506.5px;top:455px;width:214.7px;height:29px;background:#fff;border:1px solid #dadada;border-bottom:none;"></div>
<div class="t" style="left:525.10px;top:458.01px;font-size:14.4px;line-height:20px;color:#111;letter-spacing:-0.044px;">Fechamento do Documento</div>
<div class="t" style="left:521.40px;top:494.81px;font-size:14.4px;line-height:20px;color:#111;letter-spacing:0.050px;">Tributação</div>
<svg class="a" style="left:939.0px;top:502.0px" width="12" height="7" viewBox="0 0 12 7"><path d="M0.6 0.9 L6 6 L11.4 0.9" fill="none" stroke="#3c3c3c" stroke-width="1.35"/></svg>
<svg class="a" style="left:962.7px;top:493.8px" width="21" height="21" viewBox="0 0 21 21"><line x1="12.4" y1="12.8" x2="18.7" y2="18.6" stroke="#a8551f" stroke-width="3.1" stroke-linecap="round"/><line x1="12.1" y1="12.5" x2="14" y2="14.3" stroke="#4a2a16" stroke-width="3.1"/><circle cx="7.4" cy="7.6" r="6.5" fill="#e9eeef" stroke="#98a8aa" stroke-width="1.9"/><circle cx="7.4" cy="7.6" r="4.7" fill="none" stroke="#f4f7f7" stroke-width="1.3"/></svg>
<div class="t" style="left:522.60px;top:524.31px;font-size:14.4px;line-height:20px;color:#111;letter-spacing:0.045px;">Valor Total</div>
<div class="t" style="right:620.85px;top:524.31px;font-size:14.4px;line-height:20px;color:#111;letter-spacing:0.250px;">1.000,00</div>
<div class="t" style="right:716.00px;top:552.67px;font-size:14.4px;line-height:20px;color:#111;letter-spacing:-0.800px;">COFINS</div>
<div class="dis" style="left:595.2px;top:549.2px;width:95.1px;height:29.0px;"></div>
<div class="t" style="right:620.85px;top:552.67px;font-size:14.4px;line-height:20px;color:#858585;letter-spacing:0.250px;">0,00</div>
<div class="t" style="right:716.00px;top:581.03px;font-size:14.4px;line-height:20px;color:#111;letter-spacing:-0.800px;">IRRF</div>
<div class="dis" style="left:595.2px;top:577.5px;width:95.1px;height:29.0px;"></div>
<div class="t" style="right:620.85px;top:581.03px;font-size:14.4px;line-height:20px;color:#858585;letter-spacing:0.250px;">0,00</div>
<div class="t" style="left:563.30px;top:609.39px;font-size:14.4px;line-height:20px;color:#111;letter-spacing:-0.505px;">CSL</div>
<div class="dis" style="left:595.2px;top:605.9px;width:95.1px;height:29.0px;"></div>
<div class="t" style="right:620.85px;top:609.39px;font-size:14.4px;line-height:20px;color:#858585;letter-spacing:0.250px;">0,00</div>
<div class="t" style="left:531.00px;top:637.75px;font-size:14.4px;line-height:20px;color:#111;letter-spacing:-0.154px;">Base ISS</div>
<div class="dis" style="left:595.2px;top:634.2px;width:95.1px;height:29.0px;"></div>
<div class="t" style="right:620.85px;top:637.75px;font-size:14.4px;line-height:20px;color:#858585;letter-spacing:0.250px;">0,00</div>
<div class="t" style="left:551.00px;top:666.11px;font-size:14.4px;line-height:20px;color:#111;letter-spacing:-0.243px;">% ISS</div>
<div class="dis" style="left:595.2px;top:662.6px;width:95.1px;height:29.0px;"></div>
<div class="t" style="right:620.85px;top:666.11px;font-size:14.4px;line-height:20px;color:#858585;letter-spacing:0.250px;">0,00</div>
<div class="t" style="left:531.00px;top:694.47px;font-size:14.4px;line-height:20px;color:#111;letter-spacing:-0.107px;">Valor ISS</div>
<div class="dis" style="left:595.2px;top:691.0px;width:95.1px;height:29.0px;"></div>
<div class="t" style="right:620.85px;top:694.47px;font-size:14.4px;line-height:20px;color:#858585;letter-spacing:0.250px;">0,00</div>
<div class="t" style="left:559.00px;top:722.83px;font-size:14.4px;line-height:20px;color:#111;letter-spacing:-0.703px;">INSS</div>
<div class="dis" style="left:595.2px;top:719.3px;width:95.1px;height:29.0px;"></div>
<div class="t" style="right:620.85px;top:722.83px;font-size:14.4px;line-height:20px;color:#858585;letter-spacing:0.250px;">0,00</div>
<div class="t" style="right:716.00px;top:751.19px;font-size:14.4px;line-height:20px;color:#111;letter-spacing:-0.800px;">PIS</div>
<div class="dis" style="left:595.2px;top:747.7px;width:95.1px;height:29.0px;"></div>
<div class="t" style="right:620.85px;top:751.19px;font-size:14.4px;line-height:20px;color:#858585;letter-spacing:0.250px;">0,00</div>
<div class="t" style="left:528.30px;top:779.55px;font-size:14.4px;line-height:20px;color:#111;letter-spacing:0.083px;">Desconto</div>
<div class="t" style="right:620.85px;top:779.55px;font-size:14.4px;line-height:20px;color:#000;letter-spacing:0.250px;">0,00</div>
<div class="t" style="left:519.00px;top:807.91px;font-size:14.4px;line-height:20px;color:#111;letter-spacing:0.063px;">Valor Deso</div>
<div class="t" style="left:743.00px;top:524.31px;font-size:14.4px;line-height:20px;color:#111;letter-spacing:0.222px;">Desp. Acessórias</div>
<div class="dis" style="left:863.3px;top:520.8px;width:93.7px;height:29.0px;"></div>
<div class="t" style="left:747.00px;top:552.67px;font-size:14.4px;line-height:20px;color:#111;letter-spacing:0.067px;">Base Subst. Trib.</div>
<div class="t" style="left:752.50px;top:581.03px;font-size:14.4px;line-height:20px;color:#111;letter-spacing:0.026px;">Subst. Tributária</div>
<div class="t" style="left:774.20px;top:609.39px;font-size:14.4px;line-height:20px;color:#111;letter-spacing:-0.104px;">Base Cálculo</div>
<div class="t" style="right:353.95px;top:609.39px;font-size:14.4px;line-height:20px;color:#000;letter-spacing:0.250px;">0,00</div>
<div class="t" style="left:809.00px;top:637.75px;font-size:14.4px;line-height:20px;color:#111;letter-spacing:-0.668px;">% ICMS</div>
<div class="t" style="right:353.95px;top:637.75px;font-size:14.4px;line-height:20px;color:#000;letter-spacing:0.250px;">0,00</div>
<div class="t" style="left:789.00px;top:666.11px;font-size:14.4px;line-height:20px;color:#111;letter-spacing:-0.375px;">Valor ICMS</div>
<div class="t" style="right:353.95px;top:666.11px;font-size:14.4px;line-height:20px;color:#000;letter-spacing:0.250px;">0,00</div>
<div class="t" style="right:448.00px;top:694.47px;font-size:14.4px;line-height:20px;color:#111;letter-spacing:-0.800px;">% IPI</div>
<div class="t" style="right:353.95px;top:694.47px;font-size:14.4px;line-height:20px;color:#000;letter-spacing:0.250px;">0,00</div>
<div class="t" style="left:807.70px;top:722.83px;font-size:14.4px;line-height:20px;color:#111;letter-spacing:-0.451px;">Valor IPI</div>
<div class="t" style="right:353.95px;top:722.83px;font-size:14.4px;line-height:20px;color:#000;letter-spacing:0.250px;">0,00</div>
<div class="t" style="left:776.70px;top:751.19px;font-size:14.4px;line-height:20px;color:#111;letter-spacing:0.111px;">Valor Outros</div>
<div class="dis" style="left:863.3px;top:747.7px;width:93.7px;height:29.0px;"></div>
<div class="t" style="right:353.95px;top:751.19px;font-size:14.4px;line-height:20px;color:#858585;letter-spacing:0.250px;">1.000,00</div>
<div class="t" style="left:774.00px;top:779.55px;font-size:14.4px;line-height:20px;color:#111;letter-spacing:0.063px;">Valor Isentas</div>
<div class="dis" style="left:863.3px;top:776.0px;width:93.7px;height:29.0px;"></div>
<div class="t" style="right:353.95px;top:779.55px;font-size:14.4px;line-height:20px;color:#858585;letter-spacing:0.250px;">0,00</div>
<div class="t" style="left:775.00px;top:807.91px;font-size:14.4px;line-height:20px;color:#111;letter-spacing:-0.015px;">Valor Liquido</div>
<div class="dis" style="left:863.3px;top:804.4px;width:93.7px;height:29.0px;"></div>
<div class="t" style="right:353.95px;top:807.91px;font-size:14.4px;line-height:20px;color:#858585;letter-spacing:0.250px;">1.000,00</div>
<div style="left:0;top:861px;width:1305px;height:9px;background:#fff;"></div>
</body></html>
